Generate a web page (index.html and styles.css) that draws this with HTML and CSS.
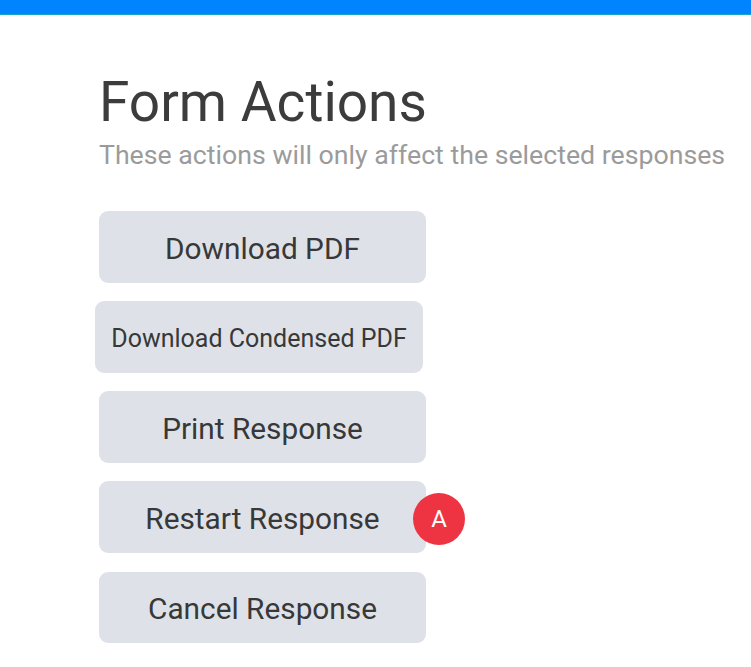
FILE: index.html
```html
<!DOCTYPE html>
<html lang="en">
<head>
<meta charset="utf-8">
<title>Form Actions</title>
<link rel="stylesheet" href="styles.css">
</head>
<body>
<div class="topbar"></div>
<main class="panel">
  <h1 class="title">Form Actions</h1>
  <p class="subtitle">These actions will only affect the selected responses</p>
  <div class="actions">
    <button class="btn">Download PDF</button>
    <button class="btn btn-condensed">Download Condensed PDF</button>
    <button class="btn">Print Response</button>
    <div class="btn-wrap">
      <button class="btn">Restart Response</button>
      <span class="badge">A</span>
    </div>
    <button class="btn btn-last">Cancel Response</button>
  </div>
</main>
</body>
</html>
```

FILE: styles.css
```css
html, body {
  margin: 0;
  padding: 0;
  background: #ffffff;
  font-family: Roboto, "Liberation Sans", sans-serif;
}

.topbar {
  height: 14px;
  background: #0084ff;
  border-bottom: 1px solid #17a6c6;
}

.panel {
  padding: 0 0 0 99px;
}

.title {
  margin: 55px 0 0 0;
  font-size: 55px;
  font-weight: 400;
  line-height: 64px;
  color: #3c3c3c;
}

.subtitle {
  margin: 5px 0 0 0;
  font-size: 26.7px;
  line-height: 32px;
  color: #9b9b9b;
}

.actions {
  margin-top: 40px;
  display: flex;
  flex-direction: column;
  align-items: flex-start;
  gap: 18px;
}

.btn {
  width: 327px;
  height: 72px;
  border: none;
  border-radius: 9px;
  background: #dee2e8;
  color: #383838;
  font-family: Roboto, "Liberation Sans", sans-serif;
  font-size: 29.8px;
  padding: 2px 0 0 0;
  display: flex;
  align-items: center;
  justify-content: center;
}

.btn-condensed {
  width: 328px;
  margin-left: -4px;
  font-size: 25px;
}

.btn-last {
  margin-top: 1px;
  height: 71px;
}

.btn-wrap {
  position: relative;
}

.badge {
  position: absolute;
  left: 314px;
  top: 12px;
  width: 52px;
  height: 52px;
  border-radius: 50%;
  background: #ee3442;
  color: #ffffff;
  font-size: 24px;
  display: flex;
  align-items: center;
  justify-content: center;
}
```
